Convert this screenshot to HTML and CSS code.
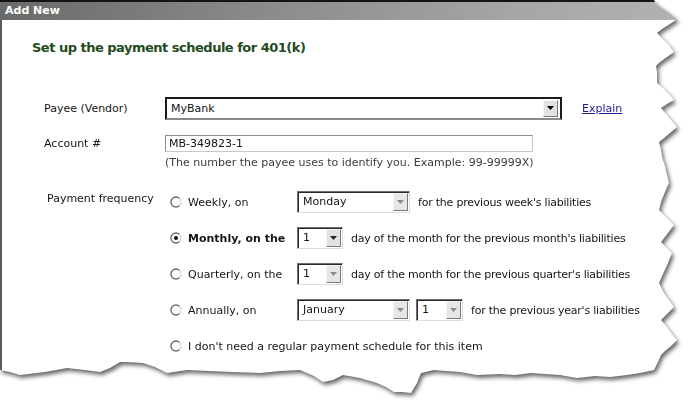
FILE: index.html
```html
<!DOCTYPE html>
<html>
<head>
<meta charset="utf-8">
<title>Add New</title>
<link rel="stylesheet" href="styles.css">
</head>
<body>
<div class="sheet">
  <div class="paper">
    <div class="titlebar">Add New</div>
    <div class="content">
      <h1 class="heading">Set up the payment schedule for 401(k)</h1>
      <div class="form">
        <div class="row payee-row">
          <div class="label">Payee (Vendor)</div>
          <div class="combo combo-payee">
            <span class="combo-text">MyBank</span>
            <span class="combo-btn"><svg width="9" height="5" viewBox="0 0 9 5"><path d="M1 0h7L4.5 4z" fill="#000"/></svg></span>
          </div>
          <a class="explain">Explain</a>
        </div>
        <div class="row account-row">
          <div class="label label-account">Account #</div>
          <div class="field-col">
            <div class="textbox">MB-349823-1</div>
            <div class="hint">(The number the payee uses to identify you. Example: 99-99999X)</div>
          </div>
        </div>
        <div class="row freq-row">
          <div class="label label-freq">Payment frequency</div>
          <div class="options">
            <div class="option">
              <div class="opt-head">
                <svg class="radio" width="12" height="12" viewBox="0 0 12 12"><circle cx="6" cy="6" r="5" fill="#fff"/><path d="M9.5 2.5A5 5 0 1 0 9.5 9.5" fill="none" stroke="#6f6f6f" stroke-width="1.4"/><path d="M9.5 2.5A5 5 0 0 1 9.5 9.5" fill="none" stroke="#d2d2d2" stroke-width="1.3"/></svg>
                <span class="opt-label">Weekly, on</span>
              </div>
              <div class="combo combo-wide">
                <span class="combo-text">Monday</span>
                <span class="combo-btn dim"><svg width="9" height="5" viewBox="0 0 9 5"><path d="M1 0h7L4.5 4z" fill="#8a8a8a"/></svg></span>
              </div>
              <span class="opt-tail">for the previous week's liabilities</span>
            </div>
            <div class="option">
              <div class="opt-head">
                <svg class="radio" width="12" height="12" viewBox="0 0 12 12"><circle cx="6" cy="6" r="5" fill="#fff"/><path d="M9.5 2.5A5 5 0 1 0 9.5 9.5" fill="none" stroke="#6f6f6f" stroke-width="1.4"/><path d="M9.5 2.5A5 5 0 0 1 9.5 9.5" fill="none" stroke="#d2d2d2" stroke-width="1.3"/><circle cx="6" cy="6" r="2" fill="#111"/></svg>
                <span class="opt-label bold">Monthly, on the</span>
              </div>
              <div class="combo combo-narrow">
                <span class="combo-text">1</span>
                <span class="combo-btn"><svg width="9" height="5" viewBox="0 0 9 5"><path d="M1 0h7L4.5 4z" fill="#222"/></svg></span>
              </div>
              <span class="opt-tail">day of the month for the previous month's liabilities</span>
            </div>
            <div class="option">
              <div class="opt-head">
                <svg class="radio" width="12" height="12" viewBox="0 0 12 12"><circle cx="6" cy="6" r="5" fill="#fff"/><path d="M9.5 2.5A5 5 0 1 0 9.5 9.5" fill="none" stroke="#6f6f6f" stroke-width="1.4"/><path d="M9.5 2.5A5 5 0 0 1 9.5 9.5" fill="none" stroke="#d2d2d2" stroke-width="1.3"/></svg>
                <span class="opt-label">Quarterly, on the</span>
              </div>
              <div class="combo combo-narrow">
                <span class="combo-text">1</span>
                <span class="combo-btn dim"><svg width="9" height="5" viewBox="0 0 9 5"><path d="M1 0h7L4.5 4z" fill="#8a8a8a"/></svg></span>
              </div>
              <span class="opt-tail">day of the month for the previous quarter's liabilities</span>
            </div>
            <div class="option">
              <div class="opt-head">
                <svg class="radio" width="12" height="12" viewBox="0 0 12 12"><circle cx="6" cy="6" r="5" fill="#fff"/><path d="M9.5 2.5A5 5 0 1 0 9.5 9.5" fill="none" stroke="#6f6f6f" stroke-width="1.4"/><path d="M9.5 2.5A5 5 0 0 1 9.5 9.5" fill="none" stroke="#d2d2d2" stroke-width="1.3"/></svg>
                <span class="opt-label">Annually, on</span>
              </div>
              <div class="combo combo-wide">
                <span class="combo-text">January</span>
                <span class="combo-btn dim"><svg width="9" height="5" viewBox="0 0 9 5"><path d="M1 0h7L4.5 4z" fill="#8a8a8a"/></svg></span>
              </div>
              <div class="combo combo-narrow combo-day">
                <span class="combo-text">1</span>
                <span class="combo-btn dim"><svg width="9" height="5" viewBox="0 0 9 5"><path d="M1 0h7L4.5 4z" fill="#8a8a8a"/></svg></span>
              </div>
              <span class="opt-tail">for the previous year's liabilities</span>
            </div>
            <div class="option option-last">
              <div class="opt-head opt-head-free">
                <svg class="radio" width="12" height="12" viewBox="0 0 12 12"><circle cx="6" cy="6" r="5" fill="#fff"/><path d="M9.5 2.5A5 5 0 1 0 9.5 9.5" fill="none" stroke="#6f6f6f" stroke-width="1.4"/><path d="M9.5 2.5A5 5 0 0 1 9.5 9.5" fill="none" stroke="#d2d2d2" stroke-width="1.3"/></svg>
                <span class="opt-label">I don't need a regular payment schedule for this item</span>
              </div>
            </div>
          </div>
        </div>
      </div>
    </div>
  </div>
</div>
</body>
</html>
```

FILE: styles.css
```css
* { box-sizing: border-box; }
html, body { margin: 0; padding: 0; background: #ffffff; }
body {
  width: 688px;
  height: 402px;
  overflow: hidden;
  font-family: "DejaVu Sans", Verdana, sans-serif;
  font-size: 11px;
  color: #151515;
}
.sheet {
  width: 688px;
  height: 402px;
  filter: drop-shadow(2px 3px 2px rgba(0, 0, 0, 0.6));
}
.paper {
  width: 688px;
  height: 402px;
  background: #ffffff;
  clip-path: polygon(0 0, 654px 0, 656px 4px, 662px 8px, 668px 12px, 677px 19px, 670px 24px, 662px 29px, 657px 33px, 662px 38px, 668px 44px, 674px 52px, 667px 57px, 660px 62px, 656px 66px, 657px 72px, 657px 83px, 663px 88px, 669px 94px, 674px 100px, 667px 104px, 661px 108px, 666px 114px, 672px 121px, 677px 127px, 670px 133px, 664px 138px, 659px 142px, 661px 150px, 662px 157px, 665px 166px, 667px 175px, 669px 183px, 665px 192px, 661px 202px, 659px 210px, 664px 215px, 670px 221px, 674px 225px, 668px 233px, 661px 242px, 666px 247px, 672px 253px, 668px 263px, 663px 274px, 659px 283px, 664px 293px, 669px 300px, 674px 307px, 668px 313px, 661px 320px, 667px 327px, 672px 334px, 677px 340px, 671px 346px, 665px 351px, 661px 355px, 658px 362px, 654px 370px, 640px 373px, 627px 375px, 610px 377px, 595px 376px, 577px 378px, 560px 375px, 545px 374px, 531px 373px, 515px 375px, 500px 374px, 477px 375px, 460px 372px, 447px 371px, 434px 370px, 421px 373px, 417px 383px, 411px 393px, 402px 392px, 394px 392px, 386px 387px, 377px 383px, 360px 378px, 343px 375px, 333px 380px, 323px 382px, 314px 376px, 300px 370px, 280px 371px, 260px 373px, 233px 372px, 210px 371px, 187px 370px, 167px 373px, 155px 367px, 143px 363px, 127px 362px, 120px 362px, 110px 368px, 100px 372px, 85px 370px, 67px 368px, 45px 372px, 20px 375px, 10px 372px, 0 370px);
}
.titlebar {
  height: 20px;
  border-top: 2px solid #141414;
  background: linear-gradient(to right, #6a6a6a 0%, #8c8c8c 40%, #a6a6a6 75%, #b2b2b2 100%);
  color: #ffffff;
  font-weight: bold;
  font-size: 11px;
  line-height: 18px;
  padding-left: 5px;
}
.content {
  height: 382px;
  border-left: 2px solid #5c5c5c;
  padding-left: 30px;
  padding-top: 20px;
}
.heading {
  margin: 0;
  font-size: 13px;
  line-height: 16px;
  font-weight: bold;
  letter-spacing: -0.5px;
  color: #1f4a22;
}
.form {
  margin-left: 12px;
  margin-top: 41px;
  display: flex;
  flex-direction: column;
}
.row { display: flex; }
.label { width: 121px; flex: none; }
.payee-row { align-items: center; height: 23px; }
.account-row { margin-top: 15px; align-items: flex-start; }
.label-account { line-height: 17px; }
.freq-row { margin-top: 22px; align-items: flex-start; }
.label-freq { padding-left: 3px; line-height: 16px; }

.combo {
  display: flex;
  align-items: center;
  height: 22px;
  flex: none;
  background: #ffffff;
  border: 1px solid;
  border-color: #6e6e6e #dcdcdc #dcdcdc #6e6e6e;
  box-shadow: inset 1px 1px 0 #2a2a2a;
  padding-left: 5px;
}
.combo-text { flex: 1; line-height: 14px; }
.combo-btn {
  flex: none;
  width: 15px;
  height: 18px;
  margin-right: 1px;
  display: flex;
  align-items: center;
  justify-content: center;
  background: #e2e2e2;
  border: 1px solid;
  border-color: #f6f6f6 #7a7a7a #7a7a7a #f6f6f6;
}
.combo-btn.dim { background: #e6e6e6; }
.combo-payee {
  width: 397px;
  height: 23px;
  border: 2px solid #1a1a1a;
  border-bottom-color: #8a8a8a;
  box-shadow: none;
  padding-left: 4px;
}
.combo-payee .combo-btn { height: 17px; margin-right: 2px; }
.explain {
  margin-left: 20px;
  color: #1c1c9c;
  text-decoration: underline;
}
.field-col { display: flex; flex-direction: column; }
.textbox {
  width: 368px;
  height: 17px;
  border: 1px solid;
  border-color: #8c8c8c #c8c8c8 #c8c8c8 #8c8c8c;
  padding-left: 3px;
  line-height: 15px;
}
.hint {
  margin-top: 4px;
  line-height: 13px;
  color: #3c3c3c;
}
.options { display: flex; flex-direction: column; gap: 14px; }
.option { display: flex; align-items: center; height: 22px; }
.opt-head {
  width: 132px;
  flex: none;
  display: flex;
  align-items: center;
  padding-left: 5px;
}
.opt-head-free { width: auto; }
.radio { flex: none; margin-right: 6px; }
.bold { font-weight: bold; }
.combo-wide { width: 113px; }
.combo-narrow { width: 46px; }
.combo-day { margin-left: 6px; width: 47px; }
.opt-tail { margin-left: 8px; letter-spacing: -0.22px; }
```
